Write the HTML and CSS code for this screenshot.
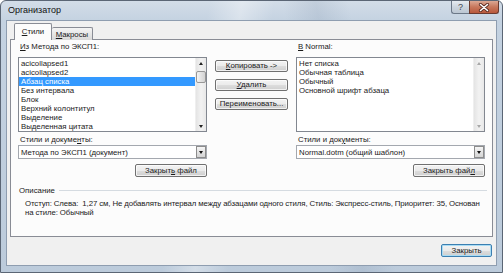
FILE: index.html
```html
<!DOCTYPE html>
<html lang="ru">
<head>
  <meta charset="UTF-8" />
  <title>Организатор</title>
  <link rel="stylesheet" href="styles.css">
</head>
<body>
  <div class="window">
    <div class="titlebar">
      <span class="title">Организатор</span>
      <div class="caption">
        <span class="cap-btn help">?</span>
        <span class="cap-btn close">
          <svg width="12" height="9" viewBox="0 0 12 9">
            <path d="M2.5 1.5 L9.5 7.5 M9.5 1.5 L2.5 7.5" stroke="#5a2a20" stroke-width="3.2" stroke-linecap="round" />
            <path d="M2.5 1.5 L9.5 7.5 M9.5 1.5 L2.5 7.5" stroke="#fff" stroke-width="1.6" stroke-linecap="round" />
          </svg>
        </span>
      </div>
    </div>

    <div class="client">
      <div class="tabs">
        <span class="tab active"><u>С</u>тили</span>
        <span class="tab"><u>М</u>акросы</span>
      </div>

      <div class="panel">
        <div class="columns">
          <div class="col">
            <div class="label"><u>И</u>з Метода по ЭКСП1:</div>
            <div class="listbox">
              <ul class="items">
                <li>acicollapsed1</li>
                <li>acicollapsed2</li>
                <li class="selected">Абзац списка</li>
                <li>Без интервала</li>
                <li>Блок</li>
                <li>Верхний колонтитул</li>
                <li>Выделение</li>
                <li>Выделенная цитата</li>
              </ul>
              <div class="scrollbar">
                <span class="arrow up"></span>
                <span class="thumb"></span>
                <span class="track"></span>
                <span class="arrow down"></span>
              </div>
            </div>
            <div class="label">Стили и докуме<u>н</u>ты:</div>
            <div class="combo">
              <span class="combo-text">Метода по ЭКСП1 (документ)</span>
              <span class="combo-btn"></span>
            </div>
            <button class="btn file-btn">Закрыт<u>ь</u> файл</button>
          </div>

          <div class="actions">
            <button class="btn"><u>К</u>опировать -&gt;</button>
            <button class="btn"><u>У</u>далить</button>
            <button class="btn">Переименовать...</button>
          </div>

          <div class="col">
            <div class="label"><u>В</u> Normal:</div>
            <div class="listbox">
              <ul class="items">
                <li>Нет списка</li>
                <li>Обычная таблица</li>
                <li>Обычный</li>
                <li>Основной шрифт абзаца</li>
              </ul>
              <div class="scrollbar disabled">
                <span class="arrow up"></span>
                <span class="track"></span>
                <span class="arrow down"></span>
              </div>
            </div>
            <div class="label">Стили и док<u>у</u>менты:</div>
            <div class="combo">
              <span class="combo-text">Normal.dotm (общий шаблон)</span>
              <span class="combo-btn"></span>
            </div>
            <button class="btn file-btn">Закрыть фай<u>л</u></button>
          </div>
        </div>

        <div class="desc">
          <div class="desc-head">Описание</div>
          <p class="desc-text">Отступ: Слева:&nbsp; 1,27 см, Не добавлять интервал между абзацами одного стиля, Стиль: Экспресс-стиль, Приоритет: 35, Основан<br>на стиле: Обычный</p>
        </div>
      </div>

      <div class="footer">
        <button class="btn default">Закрыть</button>
      </div>
    </div>
  </div>
</body>
</html>
```

FILE: styles.css
```css
body {
  margin: 0;
  background: #fff;
  font-family: "Liberation Sans", Arial, sans-serif;
  font-size: 7.8px;
  color: #1a1a1a;
}
u { text-decoration: underline; text-underline-offset: 1px; }

.window {
  width: 503px;
  height: 273px;
  box-sizing: border-box;
  border: 1px solid #5b6675;
  border-radius: 6px 6px 0 0;
  padding: 0 5px 6px 5px;
  background:
    linear-gradient(100deg, transparent 38%, rgba(255,255,255,0.35) 44%, transparent 50%),
    linear-gradient(80deg, transparent 60%, rgba(120,140,165,0.18) 66%, transparent 72%),
    linear-gradient(to bottom, #d3dde8, #c4d2e1 20px, #bccbdb);
}

.titlebar {
  height: 19px;
  margin: 0 -5px;
  display: flex;
  justify-content: space-between;
  align-items: flex-start;
}
.title {
  padding: 4px 0 0 7px;
  font-size: 9px;
  line-height: 11px;
  color: #111;
}
.caption {
  display: flex;
  margin-right: 3px;
}
.cap-btn {
  height: 13px;
  box-sizing: border-box;
  display: flex;
  align-items: center;
  justify-content: center;
  border: 1px solid #6c7888;
  border-top: none;
}
.help {
  width: 18px;
  border-right: none;
  border-radius: 0 0 0 3px;
  background: linear-gradient(#e6ebf1, #cbd4de 50%, #bcc7d3);
  color: #3d4550;
  font-size: 9px;
}
.close {
  width: 30px;
  border-color: #6a3a2f;
  border-radius: 0 0 3px 0;
  background: linear-gradient(#dca894, #c7775c 50%, #b9583c);
}

.client {
  height: 246px;
  box-sizing: border-box;
  border: 1px solid #8e9db0;
  background: #f0f0f0;
  padding: 3px 3px 0 3px;
}

.tabs {
  display: flex;
  align-items: flex-end;
  height: 16px;
  padding-left: 4px;
  margin-bottom: -1px;
  position: relative;
  z-index: 1;
}
.tab {
  box-sizing: border-box;
  display: flex;
  align-items: center;
  justify-content: center;
  border: 1px solid #898c95;
  border-bottom: none;
  border-radius: 2px 2px 0 0;
  width: 41px;
  height: 13px;
  border-left: none;
  background: linear-gradient(#f4f4f4, #e6e6e6 50%, #d9d9d9);
  padding-top: 1px;
}
.tab.active {
  width: 38px;
  height: 17px;
  border-left: 1px solid #898c95;
  background: #fcfcfc;
  padding-bottom: 2px;
}

.panel {
  height: 198px;
  box-sizing: border-box;
  border: 1px solid #898c95;
  background: #fcfcfc;
  padding: 1px 7px 0 7px;
}

.columns {
  display: grid;
  grid-template-columns: 189px 73px 189px;
  column-gap: 8px;
}
.col {
  display: flex;
  flex-direction: column;
}
.label {
  height: 11px;
  line-height: 11px;
  padding-left: 2px;
}

.listbox {
  margin-top: 5px;
  height: 75px;
  box-sizing: border-box;
  border: 1px solid #828790;
  background: #fff;
  display: flex;
  margin-bottom: 2px;
}
.items {
  flex: 1;
  list-style: none;
  margin: 0;
  padding: 1px 0 0 0;
}
.items li {
  height: 9px;
  line-height: 9px;
  padding-left: 2px;
  white-space: nowrap;
}
.items li.selected {
  background: #3399ff;
  color: #fff;
}

.scrollbar {
  width: 10px;
  display: flex;
  flex-direction: column;
  background: linear-gradient(to right, #e4e4e4, #f2f2f2 50%, #e8e8e8);
  border-left: 1px solid #efefef;
}
.arrow {
  height: 10px;
  display: flex;
  align-items: center;
  justify-content: center;
}
.arrow::before {
  content: "";
  border-left: 2.5px solid transparent;
  border-right: 2.5px solid transparent;
}
.arrow.up::before { border-bottom: 3px solid #222; }
.arrow.down::before { border-top: 3px solid #222; }
.disabled .arrow.up::before { border-bottom-color: #a8a8a8; }
.disabled .arrow.down::before { border-top-color: #a8a8a8; }
.thumb {
  height: 12px;
  margin: 3px 0 0 0;
  box-sizing: border-box;
  border: 1px solid #979797;
  border-radius: 2px;
  background: linear-gradient(to right, #f5f5f5, #e2e2e2 50%, #d3d3d3);
}
.track { flex: 1; }

.combo {
  height: 14px;
  box-sizing: border-box;
  border: 1px solid #a4a8af;
  background: #fff;
  display: flex;
  align-items: center;
  padding: 0 0 0 2px;
}
.combo-text {
  flex: 1;
  white-space: nowrap;
}
.combo-btn {
  width: 10px;
  height: 12px;
  box-sizing: border-box;
  border: 1px solid #8c8c8c;
  background: linear-gradient(#f6f6f6, #e3e3e3 50%, #d4d4d4);
  display: flex;
  align-items: center;
  justify-content: center;
}
.combo-btn::before {
  content: "";
  border-left: 2.5px solid transparent;
  border-right: 2.5px solid transparent;
  border-top: 3px solid #111;
}

.btn {
  height: 12px;
  box-sizing: border-box;
  padding: 0;
  border: 1px solid #707070;
  border-radius: 2px;
  background: linear-gradient(#f3f3f3, #ebebeb 50%, #dddddd 51%, #cfcfcf);
  font-family: inherit;
  font-size: 7.8px;
  line-height: 10px;
  color: #1a1a1a;
  box-shadow: inset 0 0 0 1px rgba(255,255,255,0.7);
}
.file-btn {
  align-self: flex-end;
  width: 72px;
  height: 13px;
  margin-top: 5px;
}

.actions {
  display: flex;
  flex-direction: column;
  gap: 7px;
  padding-top: 19px;
}

.desc {
  margin-top: 8px;
}
.desc-head {
  display: flex;
  align-items: center;
  gap: 4px;
  height: 11px;
  line-height: 11px;
  margin: 0 -2px 0 1px;
}
.desc-head::after {
  content: "";
  flex: 1;
  height: 1px;
  background: #d5dbe1;
}
.desc-text {
  margin: 3px 0 0 7px;
  line-height: 9px;
  white-space: nowrap;
  letter-spacing: -0.1px;
}

.footer {
  display: flex;
  justify-content: flex-end;
  padding: 7px 1px 0 0;
}
.btn.default {
  width: 51px;
  height: 13px;
  border-color: #3c7fb1;
  box-shadow: inset 0 0 0 1px #a9dcf4;
}
```
